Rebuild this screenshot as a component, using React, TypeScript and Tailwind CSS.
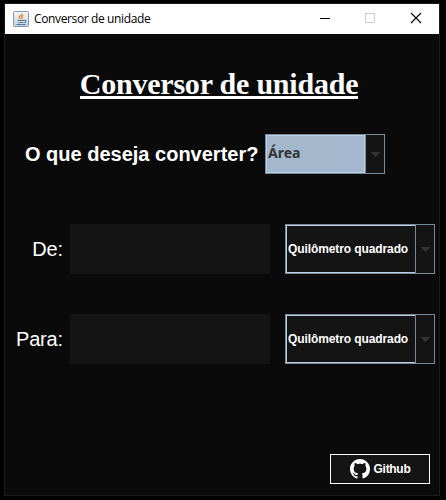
import React from 'react';

const ARIAL = "font-['Liberation_Sans',Arial,sans-serif]";

function JavaIcon() {
  return (
    <svg width="16" height="16" viewBox="0 0 16 16" className="shrink-0">
      <defs>
        <linearGradient id="tile" x1="0" y1="0" x2="0" y2="1">
          <stop offset="0" stopColor="#f4f6f8" />
          <stop offset="1" stopColor="#c3d0dc" />
        </linearGradient>
      </defs>
      <rect x="0.5" y="0.5" width="15" height="15" rx="1" fill="url(#tile)" stroke="#7f9ab2" />
      <path d="M9.200 2.500c.2 1.800-3 2.200-3 4 0 .8.8 1.300 1.200 1.900M10.600 4.600c-1.800.4-2.700 1.300-1.900 2.100.5.600.3 1.100-.1 1.600" fill="none" stroke="#ee8b35" strokeWidth="1.400" />
      <path d="M4.500 9.500h6.500M11 9.300c2.600-.4 2.400 2 .3 2.200M5.500 11.500h5M3.500 13.500h9" fill="none" stroke="#557b9d" strokeWidth="1.100" />
    </svg>
  );
}

function TitleBar() {
  return (
    <header className="flex h-[30px] shrink-0 items-center bg-white pl-2">
      <JavaIcon />
      <span className="ml-[5px] whitespace-nowrap font-['Open_Sans','Noto_Sans',sans-serif] text-[12px] leading-[16px] tracking-[-0.37px] text-black">
        Conversor de unidade
      </span>
      <svg width="112" height="30" viewBox="0 0 112 30" className="ml-auto mr-[9px]" shapeRendering="crispEdges">
        <path d="M2 14.500h10" stroke="#000" />
        <rect x="47.500" y="9.500" width="9" height="9" fill="none" stroke="#cccccc" />
        <path d="M93 9l10 10M103 9l-10 10" stroke="#000" strokeWidth="1.100" shapeRendering="auto" />
      </svg>
    </header>
  );
}

function Arrow() {
  return (
    <svg width="10" height="5" viewBox="0 0 10 5" className="mr-[1px] mt-[1px] shrink-0" shapeRendering="crispEdges">
      <path d="M0 0h10L5 5z" fill="#333333" />
    </svg>
  );
}

function UnitSelect({ label }: { label: string }) {
  return (
    <div className="flex h-[50px] w-[150px] border border-[#7a8a99] bg-[#141414]">
      <div className="flex w-[129px] items-center border border-r-0 border-[#b8cfe5] pl-[1px]">
        <span className={`${ARIAL} whitespace-nowrap text-[12px] font-bold leading-[14px] tracking-[-0.1px] text-white`}>{label}</span>
      </div>
      <div className="flex flex-1 items-center justify-center border-l border-[#7a8a99]">
        <Arrow />
      </div>
    </div>
  );
}

function ConversionRow({ label, unit }: { label: string; unit: string }) {
  return (
    <div className="flex h-[50px] items-center">
      <label className={`${ARIAL} w-[58px] whitespace-nowrap text-right text-[20px] leading-[24px] tracking-[-0.15px] text-white`}>
        {label}
      </label>
      <div className="ml-[7px] mr-[15px] h-[50px] w-[200px] bg-[#141414]" />
      <UnitSelect label={unit} />
    </div>
  );
}

export default function App() {
  return (
    <div className="h-[500px] w-[446px] overflow-hidden bg-black pl-[4px] pt-[3px]">
      <main className="flex h-[493px] w-[436px] flex-col border border-[#1b1b1b] bg-[#0a0a0a]">
        <TitleBar />
        <h1 className="mt-[32px] flex h-[34px] justify-center pr-[6px]">
          <span className="h-[33px] whitespace-nowrap border-b-[3px] border-white font-['Liberation_Serif','Times_New_Roman',serif] text-[30px] font-bold leading-[36px] tracking-[-0.21px] text-white">
            Conversor de unidade
          </span>
        </h1>
        <div className="mt-[34px] flex h-[40px] items-center pl-[20px]">
          <span className={`${ARIAL} w-[240px] whitespace-nowrap text-[20px] font-bold leading-[24px] text-white`}>
            O que deseja converter?
          </span>
          <div className="flex h-[40px] w-[120px] border border-[#7a8a99] bg-[#141414]">
            <div className="flex w-[99px] items-center border border-[#b8cfe5] bg-[#a3b8cc] pl-[1px]">
              <span className="-mt-[2px] font-['Noto_Sans','Open_Sans',sans-serif] text-[14px] font-bold leading-[18px] text-[#333333]">
                Área
              </span>
            </div>
            <div className="flex flex-1 items-center justify-center border-l border-[#7a8a99]">
              <Arrow />
            </div>
          </div>
        </div>
        <div className="mt-[50px] flex flex-col gap-[40px]">
          <ConversionRow label="De:" unit="Quilômetro quadrado" />
          <ConversionRow label="Para:" unit="Quilômetro quadrado" />
        </div>
        <div className="mb-[11px] mr-[9px] mt-auto flex justify-end">
          <button className="flex h-[30px] w-[100px] items-center justify-center gap-[4px] border border-white bg-[#141414]">
            <svg width="20" height="20" viewBox="0 0 16 16" fill="#fff">
              <path d="M8 0C3.580 0 0 3.580 0 8c0 3.540 2.290 6.530 5.470 7.590.4.070.55-.17.55-.38 0-.19-.01-.82-.01-1.490-2.010.37-2.530-.49-2.690-.94-.09-.23-.48-.94-.82-1.130-.28-.15-.68-.52-.01-.53.63-.01 1.080.58 1.230.82.72 1.210 1.870.87 2.330.66.07-.52.28-.87.51-1.070-1.780-.2-3.640-.89-3.640-3.950 0-.87.31-1.590.82-2.150-.08-.2-.36-1.020.08-2.120 0 0 .67-.21 2.200.82.64-.18 1.320-.27 2-.27s1.360.09 2 .27c1.530-1.040 2.200-.82 2.200-.82.44 1.100.16 1.920.08 2.120.51.56.82 1.270.82 2.150 0 3.070-1.870 3.750-3.650 3.950.29.25.54.73.54 1.480 0 1.070-.01 1.930-.01 2.200 0 .21.15.46.55.38A8.010 8.010 0 0 0 16 8c0-4.420-3.580-8-8-8z" />
            </svg>
            <span className={`${ARIAL} text-[12px] font-bold leading-[14px] tracking-[-0.3px] text-white`}>Github</span>
          </button>
        </div>
      </main>
    </div>
  );
}
